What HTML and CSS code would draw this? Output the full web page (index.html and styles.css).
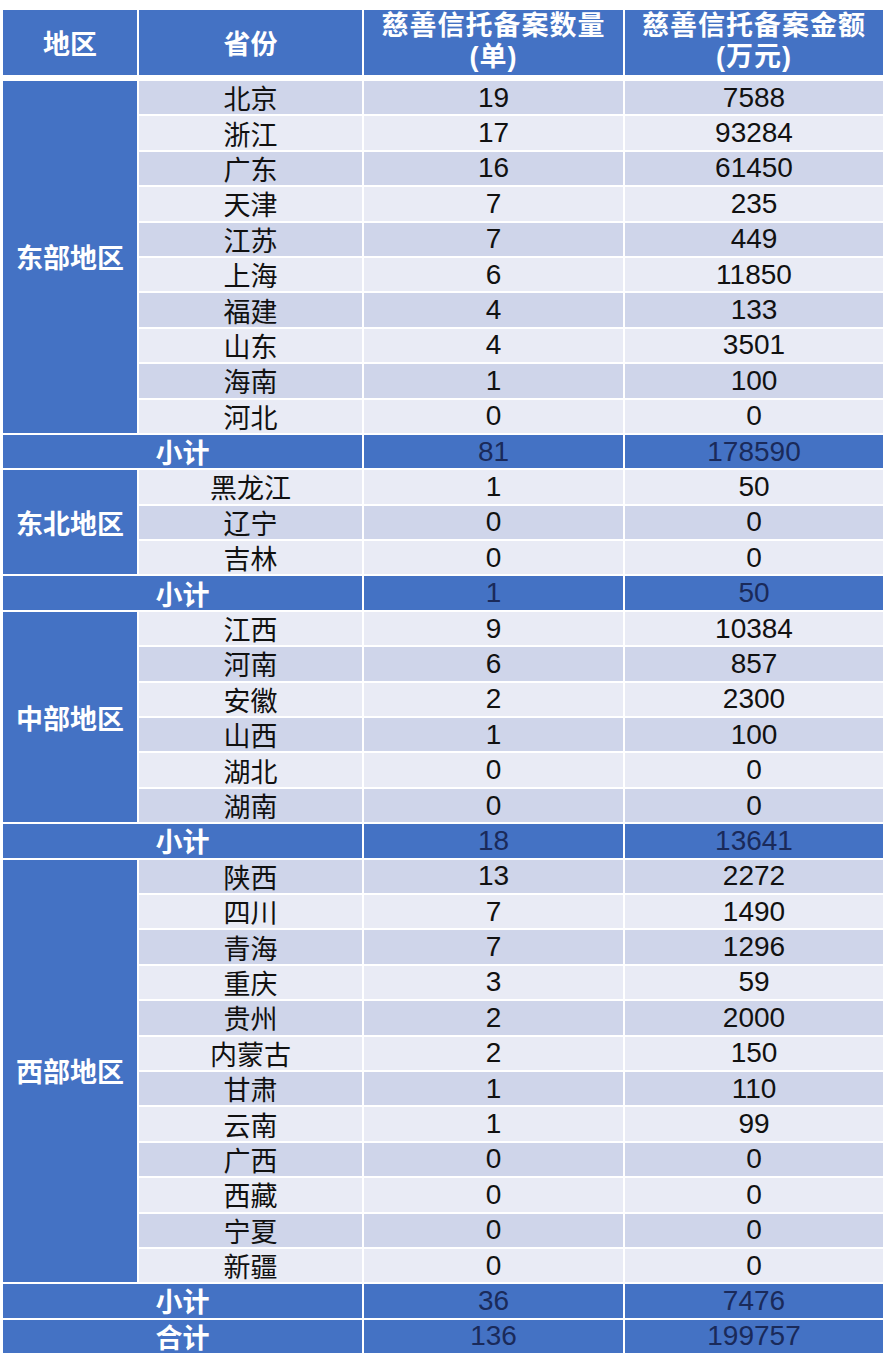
FILE: index.html
```html
<!DOCTYPE html>
<html lang="zh-CN">
<head>
<meta charset="utf-8">
<title>慈善信托备案</title>
<link rel="stylesheet" href="styles.css">
</head>
<body>
<div class="wrap">
  <div class="grid head">
    <div class="h">地区</div>
    <div class="h">省份</div>
    <div class="h two"><span class="ln">慈善信托备案数量</span><span class="ln">(单)</span></div>
    <div class="h two"><span class="ln">慈善信托备案金额</span><span class="ln">(万元)</span></div>
  </div>
  <div class="grid body">
    <div class="region r10">东部地区</div>
    <div class="c d p">北京</div><div class="c d n">19</div><div class="c d n">7588</div>
    <div class="c l p">浙江</div><div class="c l n">17</div><div class="c l n">93284</div>
    <div class="c d p">广东</div><div class="c d n">16</div><div class="c d n">61450</div>
    <div class="c l p">天津</div><div class="c l n">7</div><div class="c l n">235</div>
    <div class="c d p">江苏</div><div class="c d n">7</div><div class="c d n">449</div>
    <div class="c l p">上海</div><div class="c l n">6</div><div class="c l n">11850</div>
    <div class="c d p">福建</div><div class="c d n">4</div><div class="c d n">133</div>
    <div class="c l p">山东</div><div class="c l n">4</div><div class="c l n">3501</div>
    <div class="c d p">海南</div><div class="c d n">1</div><div class="c d n">100</div>
    <div class="c l p">河北</div><div class="c l n">0</div><div class="c l n">0</div>
    <div class="sub">小计</div><div class="subn">81</div><div class="subn">178590</div>

    <div class="region r3">东北地区</div>
    <div class="c l p">黑龙江</div><div class="c l n">1</div><div class="c l n">50</div>
    <div class="c d p">辽宁</div><div class="c d n">0</div><div class="c d n">0</div>
    <div class="c l p">吉林</div><div class="c l n">0</div><div class="c l n">0</div>
    <div class="sub">小计</div><div class="subn">1</div><div class="subn">50</div>

    <div class="region r6">中部地区</div>
    <div class="c l p">江西</div><div class="c l n">9</div><div class="c l n">10384</div>
    <div class="c d p">河南</div><div class="c d n">6</div><div class="c d n">857</div>
    <div class="c l p">安徽</div><div class="c l n">2</div><div class="c l n">2300</div>
    <div class="c d p">山西</div><div class="c d n">1</div><div class="c d n">100</div>
    <div class="c l p">湖北</div><div class="c l n">0</div><div class="c l n">0</div>
    <div class="c d p">湖南</div><div class="c d n">0</div><div class="c d n">0</div>
    <div class="sub">小计</div><div class="subn">18</div><div class="subn">13641</div>

    <div class="region r12">西部地区</div>
    <div class="c d p">陕西</div><div class="c d n">13</div><div class="c d n">2272</div>
    <div class="c l p">四川</div><div class="c l n">7</div><div class="c l n">1490</div>
    <div class="c d p">青海</div><div class="c d n">7</div><div class="c d n">1296</div>
    <div class="c l p">重庆</div><div class="c l n">3</div><div class="c l n">59</div>
    <div class="c d p">贵州</div><div class="c d n">2</div><div class="c d n">2000</div>
    <div class="c l p">内蒙古</div><div class="c l n">2</div><div class="c l n">150</div>
    <div class="c d p">甘肃</div><div class="c d n">1</div><div class="c d n">110</div>
    <div class="c l p">云南</div><div class="c l n">1</div><div class="c l n">99</div>
    <div class="c d p">广西</div><div class="c d n">0</div><div class="c d n">0</div>
    <div class="c l p">西藏</div><div class="c l n">0</div><div class="c l n">0</div>
    <div class="c d p">宁夏</div><div class="c d n">0</div><div class="c d n">0</div>
    <div class="c l p">新疆</div><div class="c l n">0</div><div class="c l n">0</div>
    <div class="sub">小计</div><div class="subn">36</div><div class="subn">7476</div>

    <div class="sub">合计</div><div class="subn">136</div><div class="subn">199757</div>
  </div>
</div>
</body>
</html>
```
FILE: styles.css
```css
html, body {
  margin: 0;
  padding: 0;
  background: #ffffff;
}
body {
  font-family: "Liberation Sans", "Noto Sans CJK SC", sans-serif;
}
.wrap {
  width: 880px;
  padding: 10px 0 0 3px;
}
.grid {
  display: grid;
  grid-template-columns: 134px 223px 259px 258px;
  column-gap: 2px;
  row-gap: 2px;
}
.head {
  height: 65px;
  grid-template-rows: 65px;
}
.body {
  margin-top: 6px;
  grid-auto-rows: 33.4px;
}
.h {
  background: #4472c4;
  color: #ffffff;
  font-family: "Noto Sans CJK SC", sans-serif;
  font-weight: 700;
  font-size: 27px;
  display: flex;
  align-items: center;
  justify-content: center;
  text-align: center;
}
.two {
  flex-direction: column;
  font-family: "Liberation Sans", "Noto Sans CJK SC", sans-serif;
  letter-spacing: 1px;
  padding-bottom: 2px;
}
.ln {
  display: block;
  font-size: 27px;
  line-height: 31px;
  height: 31px;
}
.region {
  grid-column: 1;
  background: #4472c4;
  color: #ffffff;
  font-family: "Noto Sans CJK SC", sans-serif;
  font-weight: 700;
  font-size: 27px;
  display: flex;
  align-items: center;
  justify-content: center;
}
.r3 { grid-row: span 3; }
.r6 { grid-row: span 6; }
.r10 { grid-row: span 10; }
.r12 { grid-row: span 12; }
.c {
  display: flex;
  align-items: center;
  justify-content: center;
  color: #111111;
}
.d { background: #cfd5ea; }
.l { background: #e9ebf5; }
.p {
  font-family: "Noto Sans CJK SC", sans-serif;
  font-size: 27px;
  line-height: 1;
}
.n {
  font-family: "Liberation Sans", sans-serif;
  font-size: 28px;
  line-height: 1;
}
.sub {
  grid-column: 1 / span 2;
  background: #4472c4;
  color: #ffffff;
  font-family: "Noto Sans CJK SC", sans-serif;
  font-weight: 700;
  font-size: 27px;
  line-height: 1;
  display: flex;
  align-items: center;
  justify-content: center;
}
.subn {
  background: #4472c4;
  color: #1a2a5a;
  font-family: "Liberation Sans", sans-serif;
  font-size: 28px;
  line-height: 1;
  display: flex;
  align-items: center;
  justify-content: center;
}
```
